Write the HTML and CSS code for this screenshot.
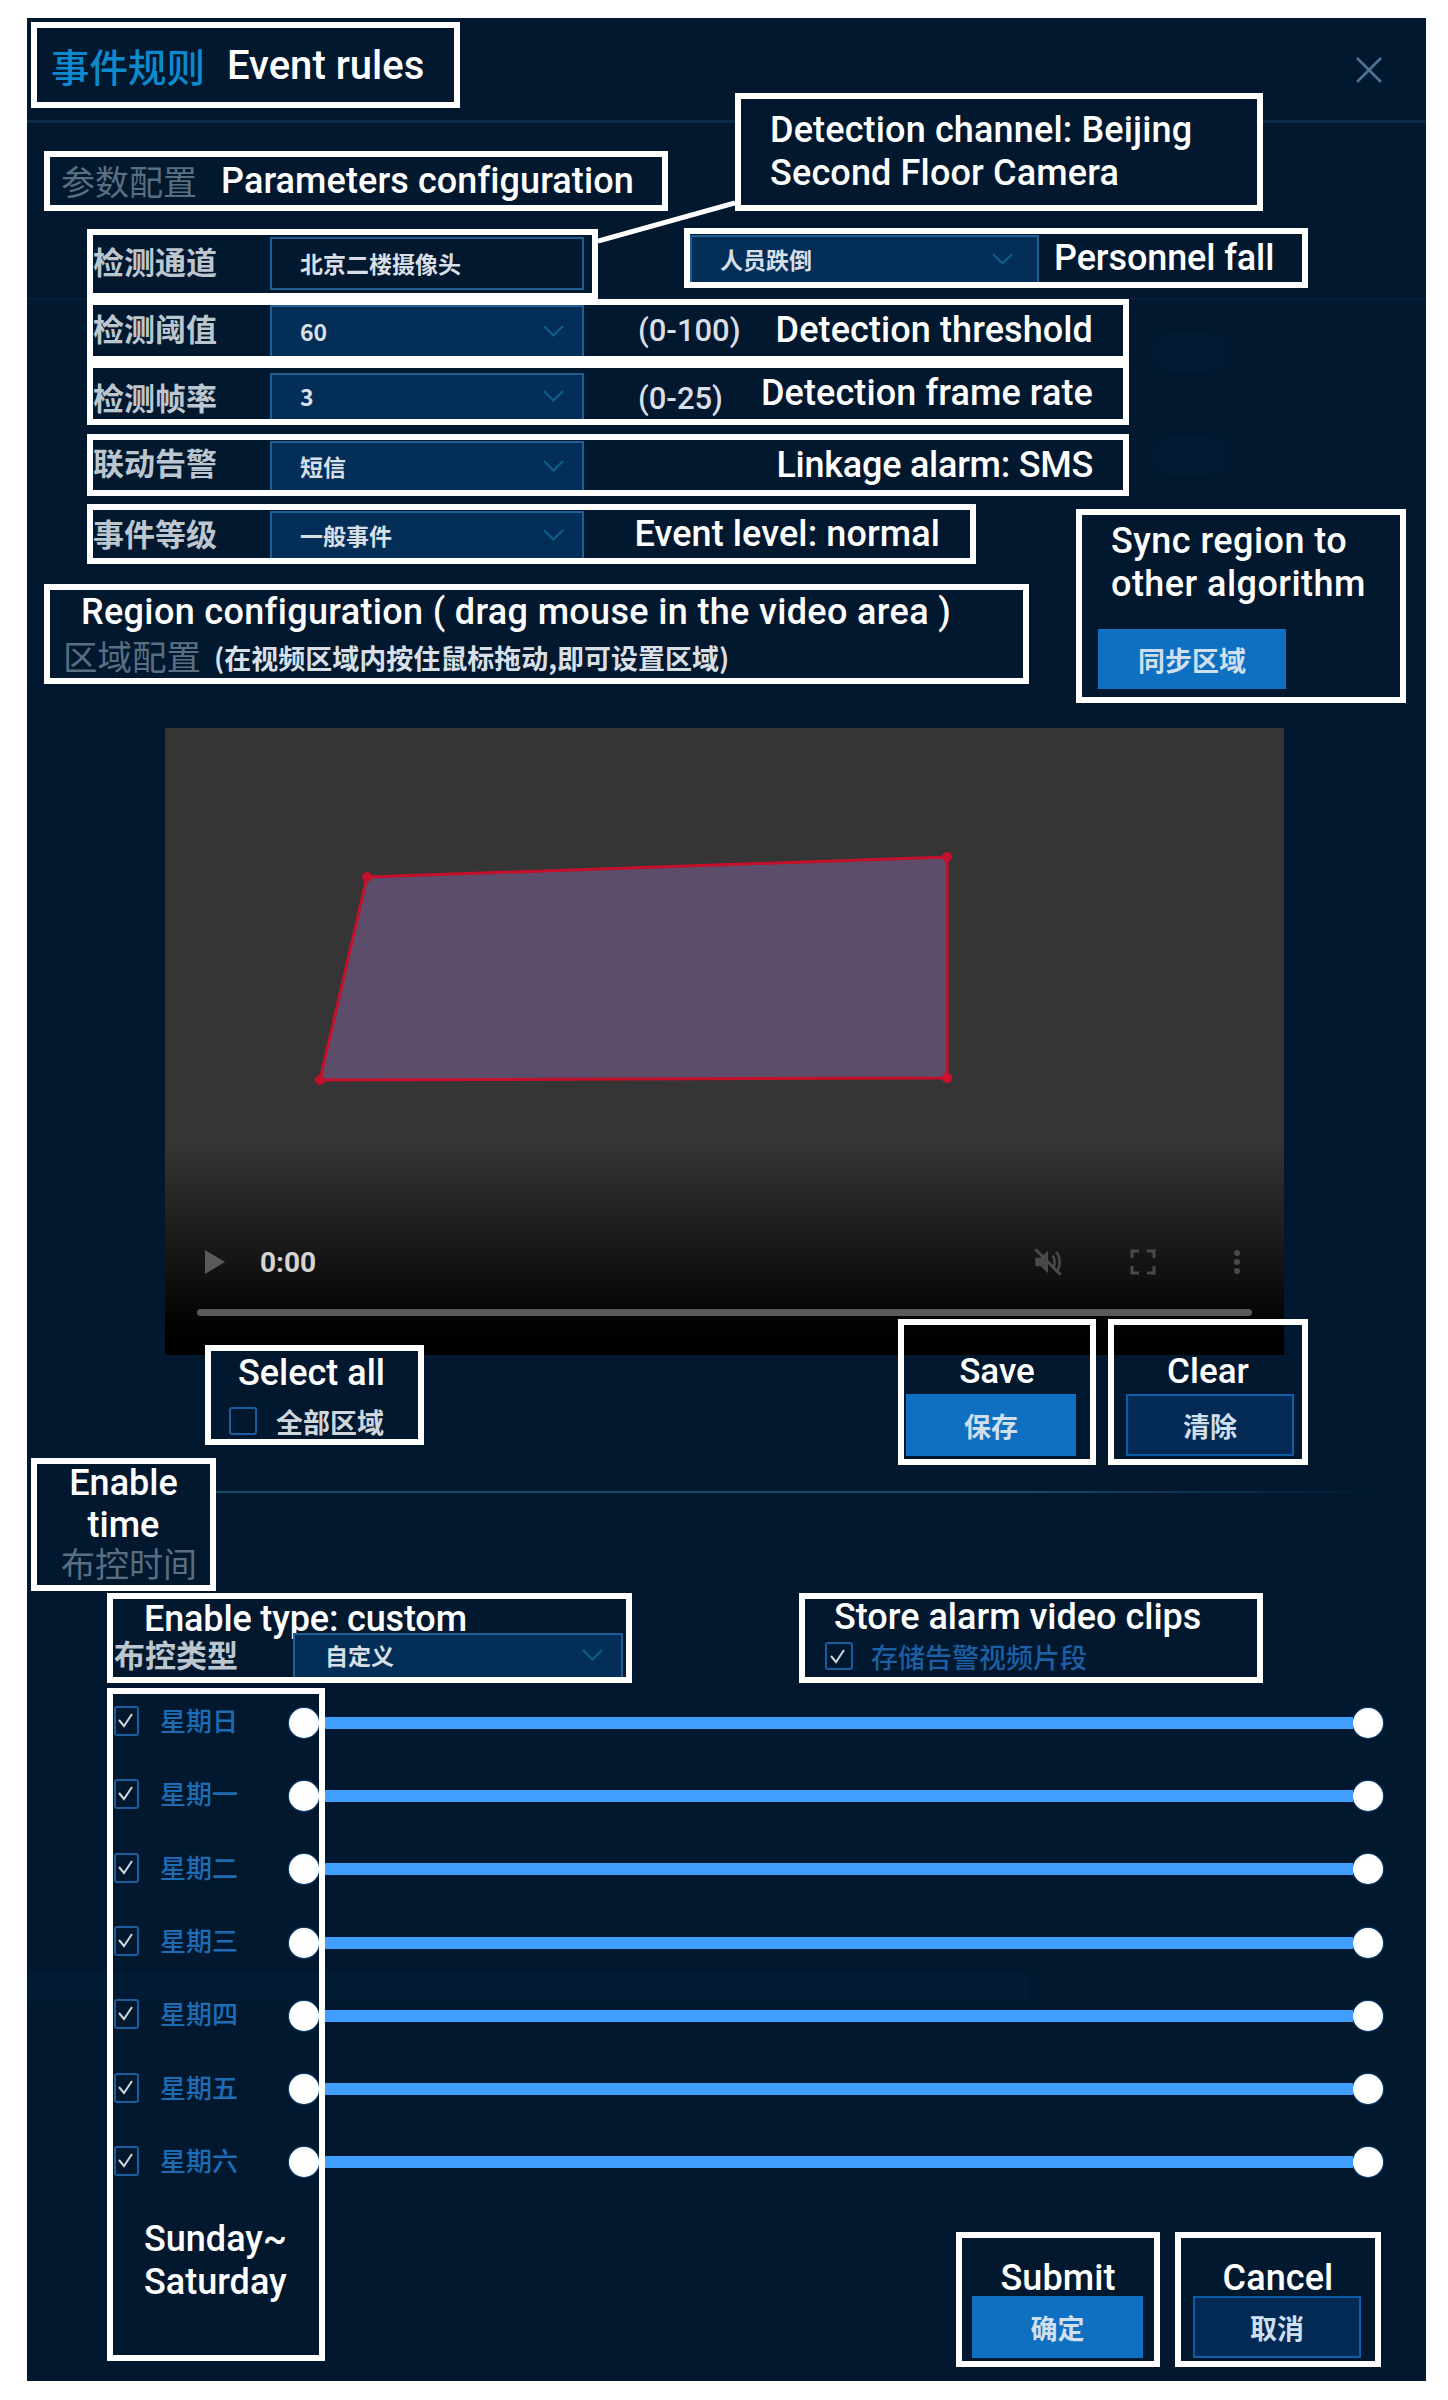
FILE: index.html
```html
<!DOCTYPE html>
<html lang="zh-CN">
<head>
<meta charset="utf-8">
<title>事件规则 Event rules</title>
<link rel="stylesheet" href="styles.css">
</head>
<body>
<div class="panel">
  <svg class="connector" width="137" height="44" viewBox="0 0 137 44"><line x1="0" y1="41" x2="137" y2="3" stroke="#fff" stroke-width="5"/></svg>
  <i class="faint-pill pill-a"></i>
  <i class="faint-pill pill-b"></i>

  <div class="top">
    <div class="top-left">
      <div class="frame title-frame"><span class="title-zh">事件规则</span><span class="en title-en">Event rules</span></div>
      <div class="frame params-frame"><span class="dim">参数配置</span><span class="en params-en">Parameters configuration</span></div>
    </div>
    <div class="frame channel-note en">Detection channel: Beijing<br>Second Floor Camera</div>
    <svg class="close" width="26" height="26" viewBox="0 0 26 26"><path d="M1 1 25 25M25 1 1 25" stroke="#4d7396" stroke-width="2.6" fill="none"/></svg>
  </div>

  <div class="row-one">
    <div class="frame form-row channel-row">
      <span class="label">检测通道</span>
      <div class="select input">北京二楼摄像头</div>
    </div>
    <div class="frame personnel">
      <div class="select personnel-select">人员跌倒<svg class="chev" width="21" height="12" viewBox="0 0 21 12"><path d="M1 1 10.5 10.5 20 1" stroke="#0e5f8e" stroke-width="2" fill="none"/></svg></div>
      <span class="en personnel-en">Personnel fall</span>
    </div>
  </div>

  <div class="frame form-row wide thresh">
    <span class="label">检测阈值</span>
    <div class="select">60<svg class="chev" width="21" height="12" viewBox="0 0 21 12"><path d="M1 1 10.5 10.5 20 1" stroke="#0e5f8e" stroke-width="2" fill="none"/></svg></div>
    <span class="range">(0-100)</span>
    <span class="en note">Detection threshold</span>
  </div>
  <div class="frame form-row wide rate">
    <span class="label label-low">检测帧率</span>
    <div class="select sel-rate">3<svg class="chev" width="21" height="12" viewBox="0 0 21 12"><path d="M1 1 10.5 10.5 20 1" stroke="#0e5f8e" stroke-width="2" fill="none"/></svg></div>
    <span class="range range-low">(0-25)</span>
    <span class="en note">Detection frame rate</span>
  </div>
  <div class="frame form-row wide link">
    <span class="label">联动告警</span>
    <div class="select">短信<svg class="chev" width="21" height="12" viewBox="0 0 21 12"><path d="M1 1 10.5 10.5 20 1" stroke="#0e5f8e" stroke-width="2" fill="none"/></svg></div>
    <span class="en note link-note">Linkage alarm: SMS</span>
  </div>

  <div class="lower">
    <div class="lower-left">
      <div class="frame form-row level">
        <span class="label">事件等级</span>
        <div class="select">一般事件<svg class="chev" width="21" height="12" viewBox="0 0 21 12"><path d="M1 1 10.5 10.5 20 1" stroke="#0e5f8e" stroke-width="2" fill="none"/></svg></div>
        <span class="en note">Event level: normal</span>
      </div>
      <div class="frame region">
        <div class="en region-en">Region configuration ( drag mouse in the video area )</div>
        <div class="region-zh"><span class="dim">区域配置</span><span class="hint">(在视频区域内按住鼠标拖动,即可设置区域)</span></div>
      </div>
    </div>
    <div class="frame sync">
      <div class="en sync-en">Sync region to<br>other algorithm</div>
      <div class="btn primary sync-btn">同步区域</div>
    </div>
  </div>

  <div class="video">
    <svg class="area" width="1119" height="627" viewBox="0 0 1119 627">
      <polygon points="202,149 782,129 782,350 155,352" fill="#5c4d6b" stroke="#c5102c" stroke-width="3"/>
      <circle cx="202" cy="149" r="5" fill="#c5102c"/><circle cx="782" cy="129" r="5" fill="#c5102c"/>
      <circle cx="782" cy="350" r="5" fill="#d0102c"/><circle cx="155" cy="352" r="5" fill="#c5102c"/>
    </svg>
    <div class="controls">
      <svg width="20" height="24" viewBox="0 0 20 24"><path d="M0 0 20 12 0 24Z" fill="#5a5a5a"/></svg>
      <span class="time">0:00</span>
      <svg class="mute" width="34" height="34" viewBox="0 0 24 24"><path d="M3 9v6h4l5 5V4L7 9H3Z" fill="#4a4a4a"/><path d="M15 7.5c2.2 1.6 2.2 7.4 0 9M17.5 5c3.6 3 3.6 11 0 14" stroke="#4a4a4a" stroke-width="1.8" fill="none"/><path d="M3 3 21 21" stroke="#4a4a4a" stroke-width="2"/></svg>
      <svg class="full" width="26" height="26" viewBox="0 0 26 26"><path d="M2 9V2H9M17 2H24V9M24 17V24H17M9 24H2V17" stroke="#4a4a4a" stroke-width="3" fill="none"/></svg>
      <svg class="kebab" width="8" height="26" viewBox="0 0 8 26"><circle cx="4" cy="4" r="3" fill="#4a4a4a"/><circle cx="4" cy="13" r="3" fill="#4a4a4a"/><circle cx="4" cy="22" r="3" fill="#4a4a4a"/></svg>
    </div>
    <div class="scrub"></div>
  </div>

  <div class="actions">
    <div class="frame select-all">
      <div class="en select-all-en">Select all</div>
      <div class="check-line all-line"><span class="box"></span><span class="all-zh">全部区域</span></div>
    </div>
    <div class="frame action save"><div class="en action-en">Save</div><div class="btn primary">保存</div></div>
    <div class="frame action clear"><div class="en action-en">Clear</div><div class="btn ghost">清除</div></div>
  </div>

  <div class="enable">
    <div class="frame enable-frame">
      <div class="en enable-en">Enable<br>time</div>
      <div class="dim enable-zh">布控时间</div>
    </div>
    <div class="divider"></div>
  </div>

  <div class="type-row">
    <div class="frame type-frame">
      <div class="en type-en">Enable type: custom</div>
      <div class="type-line"><span class="label type-label">布控类型</span>
        <div class="select type-select">自定义<svg class="chev" width="21" height="12" viewBox="0 0 21 12"><path d="M1 1 10.5 10.5 20 1" stroke="#0e5f8e" stroke-width="2" fill="none"/></svg></div>
      </div>
    </div>
    <div class="frame store-frame">
      <div class="en store-en">Store alarm video clips</div>
      <div class="check-line store-line"><span class="box"><svg width="21" height="24" viewBox="0 0 21 24"><path d="M4 12 9 18 17 6" stroke="#cdd6dd" stroke-width="2" fill="none"/></svg></span><span class="store-zh">存储告警视频片段</span></div>
    </div>
  </div>

  <div class="schedule">
    <div class="days-frame"></div>
    <div class="day"><span class="box"><svg width="21" height="24" viewBox="0 0 21 24"><path d="M4 12 9 18 17 6" stroke="#cdd6dd" stroke-width="2" fill="none"/></svg></span><span class="day-name">星期日</span><div class="slider"><i class="dot"></i><i class="bar"></i><i class="dot"></i></div></div>
    <div class="day"><span class="box"><svg width="21" height="24" viewBox="0 0 21 24"><path d="M4 12 9 18 17 6" stroke="#cdd6dd" stroke-width="2" fill="none"/></svg></span><span class="day-name">星期一</span><div class="slider"><i class="dot"></i><i class="bar"></i><i class="dot"></i></div></div>
    <div class="day"><span class="box"><svg width="21" height="24" viewBox="0 0 21 24"><path d="M4 12 9 18 17 6" stroke="#cdd6dd" stroke-width="2" fill="none"/></svg></span><span class="day-name">星期二</span><div class="slider"><i class="dot"></i><i class="bar"></i><i class="dot"></i></div></div>
    <div class="day"><span class="box"><svg width="21" height="24" viewBox="0 0 21 24"><path d="M4 12 9 18 17 6" stroke="#cdd6dd" stroke-width="2" fill="none"/></svg></span><span class="day-name">星期三</span><div class="slider"><i class="dot"></i><i class="bar"></i><i class="dot"></i></div></div>
    <div class="day"><span class="box"><svg width="21" height="24" viewBox="0 0 21 24"><path d="M4 12 9 18 17 6" stroke="#cdd6dd" stroke-width="2" fill="none"/></svg></span><span class="day-name">星期四</span><div class="slider"><i class="dot"></i><i class="bar"></i><i class="dot"></i></div></div>
    <div class="day"><span class="box"><svg width="21" height="24" viewBox="0 0 21 24"><path d="M4 12 9 18 17 6" stroke="#cdd6dd" stroke-width="2" fill="none"/></svg></span><span class="day-name">星期五</span><div class="slider"><i class="dot"></i><i class="bar"></i><i class="dot"></i></div></div>
    <div class="day"><span class="box"><svg width="21" height="24" viewBox="0 0 21 24"><path d="M4 12 9 18 17 6" stroke="#cdd6dd" stroke-width="2" fill="none"/></svg></span><span class="day-name">星期六</span><div class="slider"><i class="dot"></i><i class="bar"></i><i class="dot"></i></div></div>
    <div class="footer">
      <div class="en week-en">Sunday~<br>Saturday</div>
      <div class="frame foot submit"><div class="en action-en">Submit</div><div class="btn primary">确定</div></div>
      <div class="frame foot cancel"><div class="en action-en">Cancel</div><div class="btn ghost">取消</div></div>
    </div>
  </div>
</div>
</body>
</html>
```
FILE: styles.css
```css
* { box-sizing: border-box; }
html, body { margin: 0; background: #fff; }
body { padding: 18px 0 0 27px; font-family: "Noto Sans CJK SC", "Noto Sans", sans-serif; }

.panel {
  position: relative;
  width: 1399px;
  height: 2363px;
  color: #d3dae1;
  background:
    linear-gradient(#0a2a45, #0a2a45) 0 102px / 100% 3px no-repeat,
    linear-gradient(#061f39, #061f39) 0 280px / 100% 2px no-repeat,
    linear-gradient(#031c36, #031c36) 0 1955px / 1002px 28px no-repeat,
    #01182f;
}
.connector { position: absolute; left: 571px; top: 182px; z-index: 1; }
.faint-pill { position: absolute; left: 1124px; width: 76px; height: 39px; border-radius: 20px; background: #021b33; }
.pill-a { top: 315px; }
.pill-b { top: 418px; }

.frame { position: relative; border: 6px solid #fff; background: #01182f; flex: none; }
.en { font-family: Roboto, "Liberation Sans", sans-serif; font-weight: 500; color: #fff; font-size: 36px; line-height: 43px; white-space: nowrap; }
.dim { color: #5a6e82; font-size: 34px; line-height: 1.2; white-space: nowrap; }

.top { display: flex; align-items: flex-start; }
.top-left { width: 708px; flex: none; }
.title-frame { margin: 4px 0 0 4px; width: 429px; height: 86px; display: flex; align-items: center; padding-left: 14px; }
.title-zh { color: #0d8ace; font-size: 38.5px; font-weight: 500; line-height: 1; white-space: nowrap; }
.title-en { margin-left: 22px; font-size: 40px; }
.params-frame { margin: 43px 0 0 17px; width: 624px; height: 60px; display: flex; align-items: center; padding-left: 11px; }
.params-en { margin-left: 24px; font-size: 36px; letter-spacing: .1px; }
.channel-note { margin-top: 75px; width: 528px; height: 118px; padding: 10px 0 0 29px; letter-spacing: .15px; }
.close { margin: 39px 0 0 93px; flex: none; }

.row-one { display: flex; align-items: flex-start; padding-left: 60px; margin-top: 18px; }
.form-row { display: flex; align-items: stretch; color: #d3dae1; }
.label { width: 177px; flex: none; font-size: 31px; font-weight: 700; line-height: 1.2; align-self: center; padding-bottom: 6px; white-space: nowrap; color: #bcc6cf; }
.label-low { padding: 6px 0 0; }
.select {
  width: 314px; flex: none; display: flex; align-items: center; padding: 0 0 2px 28px;
  font-size: 23px; color: #d8dfe6; white-space: nowrap; font-weight: 700;
  background: #032e58; border: 2px solid #1f5f96; border-bottom: 0;
}
.chev { margin-left: auto; margin-right: 18px; flex: none; }
.channel-row { width: 511px; height: 70px; }
.input { margin: 2px 0 3px; background: transparent; border-bottom: 2px solid #1f5f96; }
.personnel { margin: -1px 0 0 86px; width: 624px; height: 60px; display: flex; align-items: stretch; }
.personnel-select { width: 349px; margin-top: 1px; }
.personnel-select .chev { margin-right: 24px; }
.personnel-en { margin-left: 15px; align-self: center; letter-spacing: -.1px; }

.wide { margin-left: 60px; width: 1042px; }
.thresh { height: 63px; }
.rate { height: 63px; }
.sel-rate { margin-top: 5px; }
.link { margin-top: 9px; height: 62px; }
.link .select { margin-top: 1px; }
.range { margin-left: 54px; align-self: center; font-family: Roboto, "Liberation Sans", sans-serif; font-size: 31px; font-weight: 500; color: #d8dfe6; white-space: nowrap; }
.range-low { padding-top: 9px; }
.note { margin-left: auto; padding-right: 30px; align-self: center; letter-spacing: .1px; }
.link-note { letter-spacing: -.25px; }

.lower { display: flex; align-items: flex-start; margin-top: 8px; }
.lower-left { width: 1049px; flex: none; }
.level { margin-left: 60px; width: 889px; height: 60px; }
.level .select { margin-top: 1px; }
.level .label { padding-bottom: 3px; }
.region { margin: 20px 0 0 17px; width: 985px; height: 100px; }
.region-en { padding-left: 31px; line-height: 44px; letter-spacing: .34px; }
.region-zh { display: flex; align-items: center; height: 44px; padding-left: 13px; }
.region-zh .dim { font-size: 34.5px; }
.hint { margin-left: 13px; padding-top: 2px; font-size: 27px; font-weight: 700; color: #d8dfe6; white-space: nowrap; }
.sync { margin-top: 5px; width: 330px; height: 194px; }
.sync-en { padding: 5px 0 0 29px; letter-spacing: .45px; }
.btn { display: flex; align-items: center; justify-content: center; height: 62px; font-size: 27px; color: #cfdfee; font-weight: 700; flex: none; }
.primary { background: #0f6fc0; }
.ghost { background: #022a54; border: 2px solid #0a5ea8; }
.sync-btn { margin: 23px 0 0 16px; width: 188px; height: 60px; }

.video {
  position: relative; margin: 25px 0 0 138px; width: 1119px; height: 627px;
  display: flex; flex-direction: column; justify-content: flex-end;
  background: linear-gradient(#353535 0, #353535 66%, #000 97%);
}
.area { position: absolute; left: 0; top: 0; }
.controls { position: relative; display: flex; align-items: center; height: 50px; padding: 0 43px 0 40px; }
.time { margin-left: 35px; font-family: Roboto, "Liberation Sans", sans-serif; font-size: 28px; font-weight: 700; color: #d5d5d5; }
.mute { margin-left: auto; }
.full { margin-left: 65px; }
.kebab { margin-left: 77px; }
.scrub { margin: 22px 32px 39px; height: 7px; border-radius: 4px; background: #5a5a5a; position: relative; }

.actions { position: relative; z-index: 1; display: flex; align-items: flex-start; margin-top: -36px; padding-left: 178px; }
.select-all { margin-top: 26px; width: 219px; height: 100px; }
.select-all-en { text-align: center; line-height: 44px; padding-right: 6px; }
.check-line { display: flex; align-items: center; height: 44px; padding-left: 18px; }
.all-line { margin-top: 4px; }
.box { display: block; width: 28px; height: 28px; border: 2px solid #1c5c9c; border-radius: 3px; flex: none; }
.all-zh { margin-left: 19px; font-size: 27px; font-weight: 700; white-space: nowrap; color: #cfd6dc; }
.action { height: 146px; display: flex; flex-direction: column; justify-content: flex-end; padding-bottom: 3px; background: transparent; }
.save { margin-left: 474px; width: 198px; }
.clear { margin-left: 12px; width: 200px; }
.action-en { text-align: center; line-height: 44px; font-size: 35px; }
.save .btn { margin-left: 2px; width: 170px; }
.clear .btn { margin-left: 12px; width: 168px; }

.enable { display: flex; align-items: flex-start; margin-top: -7px; }
.enable-frame { margin-left: 4px; width: 185px; height: 133px; text-align: center; }
.enable-en { margin-top: -2px; line-height: 42px; }
.enable-zh { line-height: 33px; padding-left: 24px; text-align: left; }
.divider { flex: 1; height: 2px; margin: 33px 46px 0 0; background: linear-gradient(90deg, #1a4869, #1a4869 70%, transparent); }

.type-row { display: flex; align-items: flex-start; margin-top: 2px; padding-left: 80px; }
.type-frame { width: 525px; height: 90px; }
.type-en { padding-left: 31px; line-height: 40px; letter-spacing: -.15px; }
.type-line { display: flex; margin-top: -6px; height: 44px; }
.type-label { width: 180px; font-size: 31px; padding: 0 0 2px 1px; }
.type-select { width: 330px; padding-left: 30px; }
.store-frame { margin-left: 167px; width: 464px; height: 90px; }
.store-en { padding-left: 29px; line-height: 36px; }
.store-line { height: 42px; padding-left: 20px; }
.store-zh { margin-left: 18px; font-size: 27px; font-weight: 500; color: #1c5fa3; white-space: nowrap; }

.schedule { position: relative; margin-top: 3px; }
.days-frame { position: absolute; left: 80px; top: 2px; width: 218px; height: 673px; border: 6px solid #fff; z-index: 2; }
.day { display: flex; align-items: center; height: 73.3px; padding-left: 87px; }
.day .box { width: 25px; height: 30px; border-radius: 3px; margin-bottom: 3px; }
.day .box svg { display: block; margin-left: -1px; }
.day-name { width: 129px; margin: 0 0 6px 21px; font-size: 26px; font-weight: 500; color: #1e6cb4; white-space: nowrap; }
.slider { display: flex; align-items: center; width: 1094px; flex: none; }
.dot { display: block; width: 30px; height: 30px; border-radius: 50%; background: #fff; box-shadow: 0 0 2px #409eff; flex: none; }
.bar { display: block; flex: 1; height: 12px; background: #409eff; }

.footer { display: flex; align-items: flex-start; padding: 0 45px 0 117px; }
.week-en { margin-top: 19px; }
.foot { height: 135px; margin-top: 33px; display: flex; flex-direction: column; justify-content: flex-end; padding-bottom: 3px; background: transparent; }
.foot .action-en { line-height: 36px; font-size: 36px; letter-spacing: .1px; }
.submit { margin-left: auto; width: 204px; }
.submit .btn { margin-left: 10px; width: 171px; }
.cancel { margin-left: 15px; width: 206px; }
.cancel .btn { margin-left: 12px; width: 168px; }
```
